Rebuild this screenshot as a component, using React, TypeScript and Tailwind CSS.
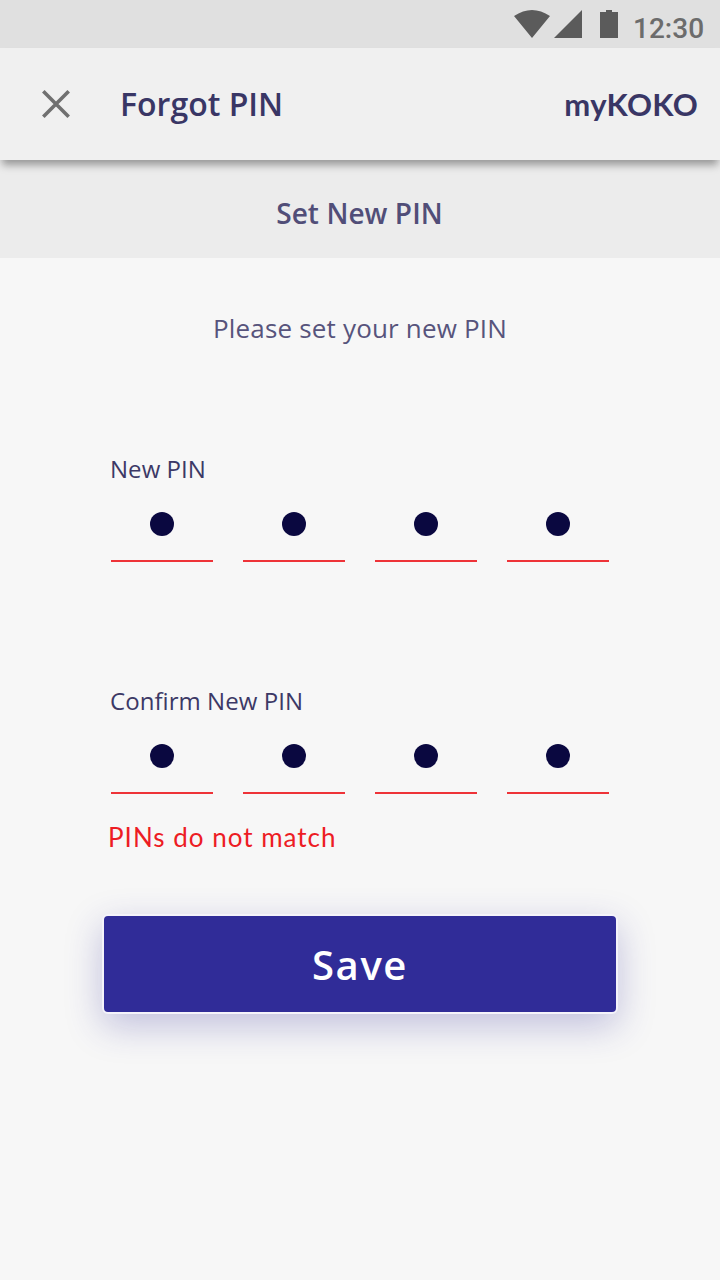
function PinRow({ label, className }: { label: string; className: string }) {
  return (
    <section className={className}>
      <h2 className="text-[24px] leading-[32px] tracking-[0.05px] text-[#3c3966] whitespace-nowrap">{label}</h2>
      <div className="ml-px mt-[27px] flex gap-[30px]">
        {[0, 1, 2, 3].map((i) => (
          <div key={i} className="flex h-[50px] w-[102px] justify-center border-b-2 border-[#ee3338]">
            <span className="size-6 rounded-full bg-[#0a0840]" />
          </div>
        ))}
      </div>
    </section>
  );
}

export default function App() {
  return (
    <div className="flex h-[1280px] w-[720px] flex-col overflow-hidden bg-[#f7f7f7] font-['Open_Sans',sans-serif]">
      <div className="flex h-12 shrink-0 justify-end bg-[#e0e0e0] pr-4 text-[#5b5b5b]">
        <svg width="106" height="48" viewBox="0 0 106 48" fill="currentColor">
          <path d="M0 16Q18 4 36 16L18 38ZM40 38L68 10V38ZM86 12H92V10H98V12H104V38H86Z" />
        </svg>
        <span className="ml-[13px] mt-[9px] w-[71px] whitespace-nowrap font-['Roboto',sans-serif] text-[28px] font-medium leading-10 text-[#6c6c6c]">12:30</span>
      </div>
      <header className="relative z-10 flex h-28 shrink-0 items-center bg-[#f0f0f0] pl-[42px] pr-[22px] text-[#393665] shadow-[0_7px_8px_-2px_rgba(0,0,0,0.36)]">
        <svg width="28" height="28" viewBox="0 0 28 28" stroke="#707070" strokeWidth="3.6">
          <path d="M1.3 1.3L26.7 26.7M26.7 1.3L1.3 26.7" />
        </svg>
        <h1 className="ml-[50px] text-[32px] font-semibold leading-[44px]">Forgot PIN</h1>
        <span className="ml-auto font-['Lato',sans-serif] text-[31px] font-bold leading-[44px] tracking-[0.3px]">myKOKO</span>
      </header>
      <div className="flex h-[98px] shrink-0 justify-center bg-[#ececec] pr-px pt-[33px] text-[28px] font-[550] leading-10 tracking-[0.08px] text-[#514e78]">Set New PIN</div>
      <p className="mt-[50px] text-center text-[26px] leading-10 tracking-[0.18px] text-[#57547c]">Please set your new PIN</p>
      <PinRow label="New PIN" className="ml-[110px] mt-[105px]" />
      <PinRow label="Confirm New PIN" className="ml-[110px] mt-[123px]" />
      <p className="ml-[108px] mt-[23px] font-['Lato',sans-serif] text-[26px] leading-10 tracking-[1px] text-[#ed1c24]">PINs do not match</p>
      <button className="ml-[102px] mt-[57px] h-[100px] w-[516px] rounded-md border-2 border-[#f4f3fa] bg-[#302c98] pt-[2px] text-[40px] font-[550] tracking-[1.6px] text-white shadow-[0_12px_36px_rgba(48,44,152,0.27)]">Save</button>
    </div>
  );
}
